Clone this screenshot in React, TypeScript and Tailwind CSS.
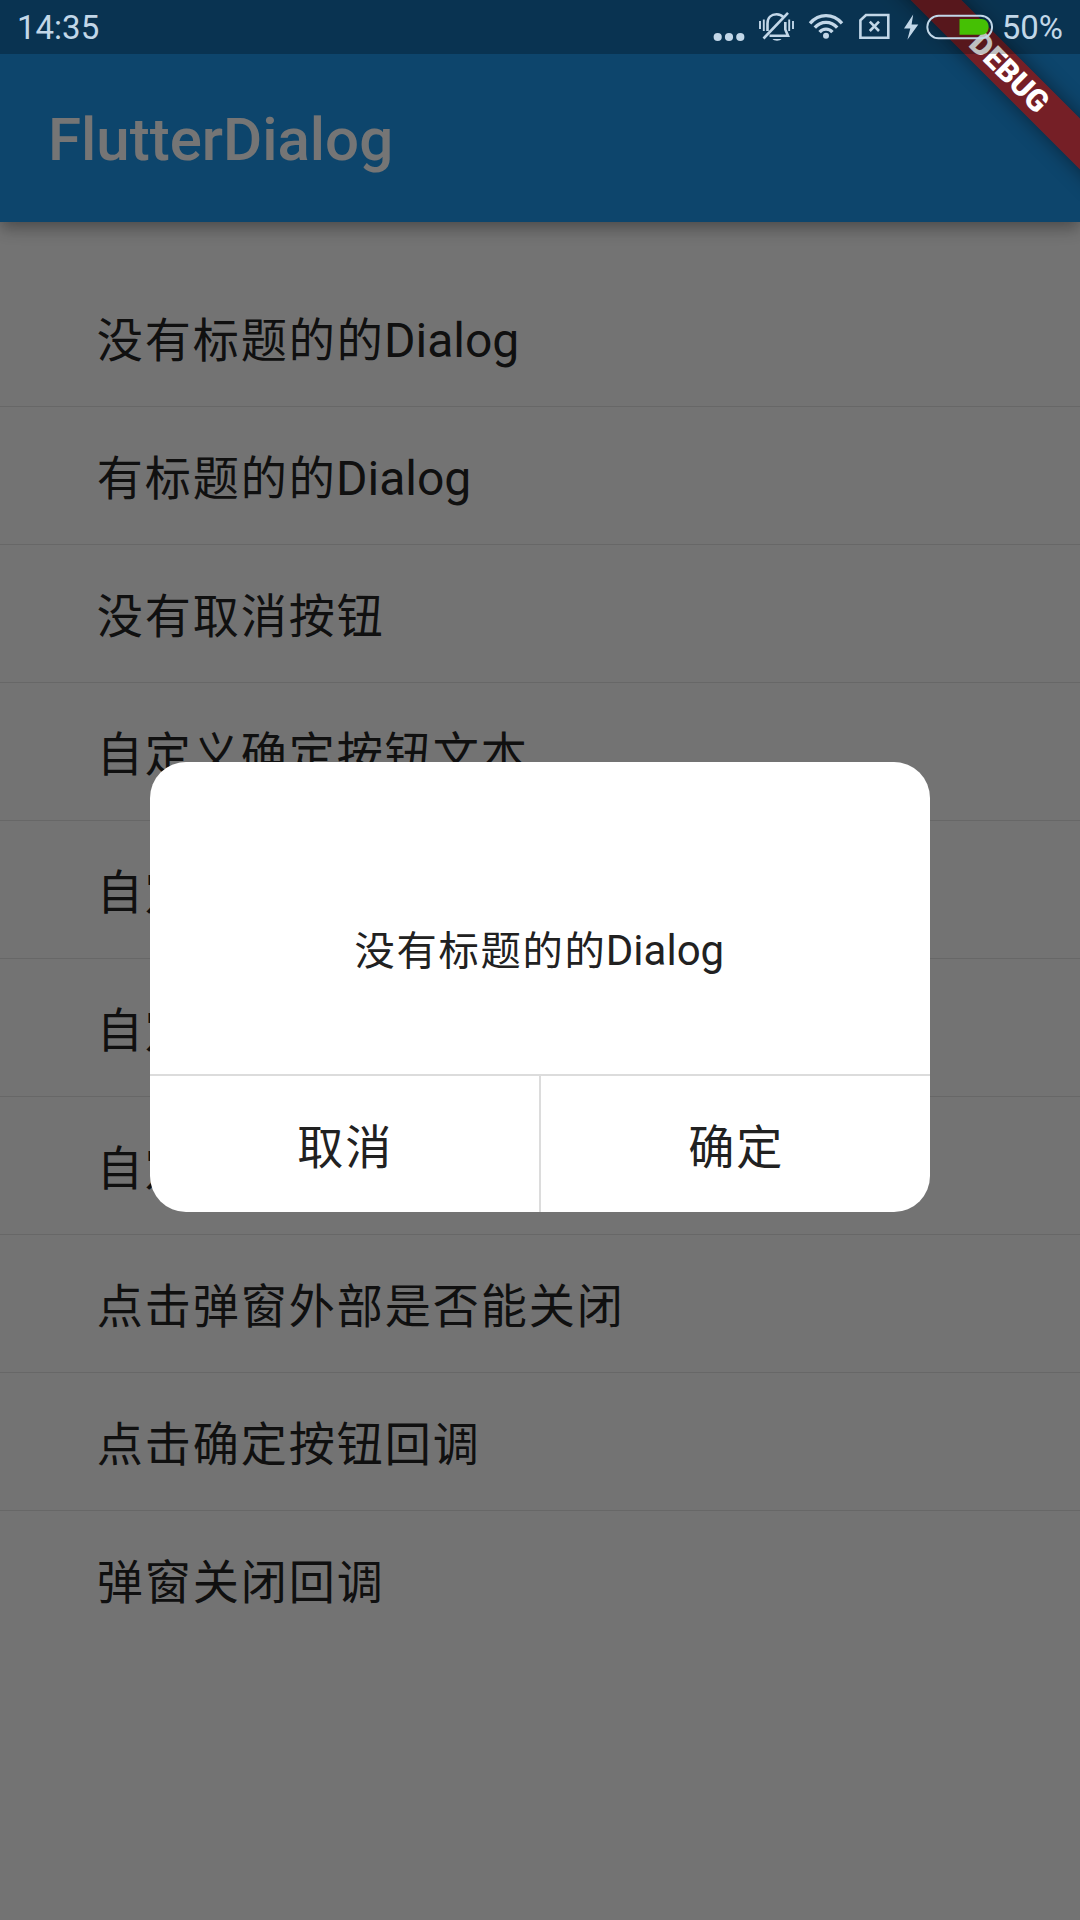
const items = [
  '没有标题的的Dialog',
  '有标题的的Dialog',
  '没有取消按钮',
  '自定义确定按钮文本',
  '自定义取消按钮文本',
  '自定义确定按钮颜色',
  '自定义取消按钮颜色',
  '点击弹窗外部是否能关闭',
  '点击确定按钮回调',
  '弹窗关闭回调',
];

// Chinese glyphs are set slightly smaller than the Latin ones, on the same advance width.
function Label({ text }: { text: string }) {
  const [, chinese, latin] = text.match(/^([^A-Za-z]*)(.*)$/) ?? ['', text, ''];
  return (
    <span className="whitespace-nowrap">
      <span className="-mr-[0.015em] ml-[0.015em] text-[0.96em] tracking-[0.0417em]">{chinese}</span>
      {latin}
    </span>
  );
}

function StatusBar() {
  return (
    <div className="absolute inset-x-0 top-0 flex h-[54px] items-start bg-black/25 text-[33px] leading-[54px] text-[#c2d7e8]">
      <span className="ml-[17px] pt-px">14:35</span>
      <div className="ml-auto flex items-start">
        <svg width="32" height="54" viewBox="713 0 32 54" fill="currentColor">
          <circle cx="717.7" cy="37" r="4.1" />
          <circle cx="729" cy="37" r="4.1" />
          <circle cx="740.3" cy="37" r="4.1" />
        </svg>
        <svg className="ml-3" width="40" height="54" viewBox="757 0 40 54" fill="none" stroke="currentColor" strokeWidth="2.6">
          <path d="M767.5 31 V23.5 C767.5 17.5 771.5 14.3 776.5 14.3 C779.5 14.3 782 15.5 783.6 17.5" />
          <path d="M785.3 22 V29.5 L788 35.8 H769.5" />
          <path d="M763.5 38.5 L788 12.8" />
          <path d="M772.5 39 H781.5 C780 41.2 774 41.2 772.5 39Z" fill="currentColor" stroke="none" />
          <path d="M760 21 V29 M763.8 19.5 V31 M789.2 19.5 V31 M793 21 V29" strokeWidth="1.9" />
        </svg>
        <svg className="ml-2.5" width="38" height="54" viewBox="807 0 38 54" fill="none" stroke="currentColor" strokeWidth="3.3">
          <path d="M810 23.3 C819 13.1 833 13.1 842 23.3" />
          <path d="M814.8 27.7 C821 20.5 831 20.5 837.2 27.7" />
          <path d="M819.6 32.1 C823 28.1 829 28.1 832.4 32.1" />
          <circle cx="826" cy="35.8" r="3" fill="currentColor" stroke="none" />
        </svg>
        <svg className="ml-3" width="34" height="54" viewBox="857 0 34 54" fill="none" stroke="currentColor" strokeWidth="2.6">
          <path d="M866 15 H888.3 V37.8 H860.4 V20.4 Z" />
          <path d="M869.8 21.6 L879 31 M879 21.6 L869.8 31" strokeWidth="2.6" />
        </svg>
        <svg className="ml-3" width="16" height="54" viewBox="903 0 16 54" fill="currentColor">
          <path d="M913.2 14.5 L904 28.6 H910.3 L907.4 39.8 L918.3 24.4 H911.6 Z" />
        </svg>
        <svg className="ml-1.5" width="70" height="54" viewBox="925 0 70 54" fill="none">
          <path d="M959.5 19 H981.5 C991 19 991 34.8 981.5 34.8 H959.5 Z" fill="#45c004" />
          <rect x="927.3" y="15.7" width="64.8" height="22.6" rx="11.3" stroke="currentColor" strokeWidth="1.9" />
        </svg>
        <span className="mr-[17px] ml-[7px] pt-px">50%</span>
      </div>
    </div>
  );
}

function DebugBanner() {
  return (
    <div className="absolute top-0 right-0 h-[300px] w-[300px] overflow-hidden">
      <div className="absolute top-[54px] left-[78px] flex h-9 w-[300px] rotate-45 items-center justify-center bg-[rgba(142,22,22,0.81)] text-[30.6px] leading-9 font-black text-white shadow-[0_0_20px_rgba(0,0,0,0.45)]">
        <span className="pb-px pl-[3px]">DEBUG</span>
      </div>
    </div>
  );
}

function Dialog() {
  return (
    <div className="flex h-[450px] w-[780px] flex-col overflow-hidden rounded-[36px] bg-white text-[#212121]">
      <div className="flex flex-1 items-center justify-center pt-[66px] pr-0.5 text-[42px] leading-[50px]">
        <Label text="没有标题的的Dialog" />
      </div>
      <div className="flex h-[138px] border-t-2 border-[#dcdcdc] text-[48px] leading-[56px]">
        <button className="flex flex-1 items-center justify-center border-r-2 border-[#dcdcdc] pt-2">
          <Label text="取消" />
        </button>
        <button className="flex flex-1 items-center justify-center pt-2">
          <Label text="确定" />
        </button>
      </div>
    </div>
  );
}

export default function App() {
  return (
    <div className="relative h-[1920px] w-[1080px] overflow-hidden bg-[#fafafa] font-[Roboto,'Noto_Sans_CJK_SC',sans-serif]">
      <header className="relative flex h-[222px] items-center bg-[#1e96eb] px-12 pt-[58px] text-[60px] font-medium text-white shadow-[0_6px_12px_-3px_rgba(0,0,0,0.2),0_10px_14px_rgba(0,0,0,0.12),0_3px_24px_rgba(0,0,0,0.08)]">
        <h1>FlutterDialog</h1>
      </header>
      <ul className="pt-[47px]">
        {items.map((label) => (
          <li
            key={label}
            className="flex h-[138px] items-center border-b border-[#e0e0e0] px-24 pt-[7px] text-[48px] leading-[56px] text-[#242424] last:border-transparent"
          >
            <Label text={label} />
          </li>
        ))}
      </ul>
      <div className="absolute inset-0 flex items-center justify-center bg-black/54 pt-[54px]">
        <Dialog />
      </div>
      <DebugBanner />
      <StatusBar />
    </div>
  );
}
